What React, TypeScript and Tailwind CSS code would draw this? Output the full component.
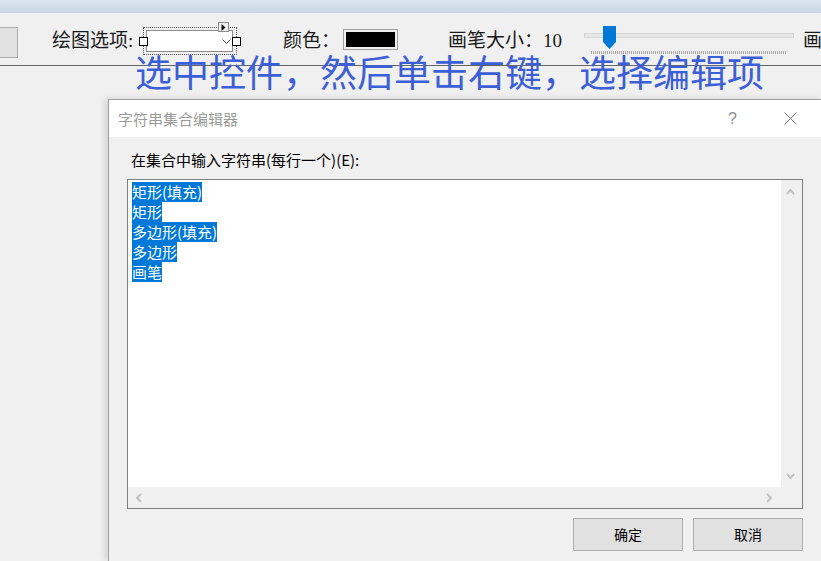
import React from "react";

function Chevron({ dir, className }: { dir: "up" | "down" | "left" | "right"; className?: string }) {
  const paths: Record<string, string> = {
    up: "M1 6 L4.5 2 L8 6",
    down: "M1 1 L4.5 5 L8 1",
    left: "M6 1 L2 5 L6 9",
    right: "M1 1 L5 5 L1 9",
  };
  const vertical = dir === "up" || dir === "down";
  return (
    <svg
      width={vertical ? 9 : 7}
      height={vertical ? 7 : 10}
      viewBox={vertical ? "0 0 9 7" : "0 0 7 10"}
      className={className}
    >
      <path d={paths[dir]} fill="none" stroke="#c2c2c2" strokeWidth="2" />
    </svg>
  );
}

const items = ["矩形(填充)", "矩形", "多边形(填充)", "多边形", "画笔"];

export default function App() {
  return (
    <div className="relative w-[821px] h-[561px] overflow-hidden bg-[#f0f0f0] font-['Noto_Sans_CJK_SC',sans-serif]">
      {/* top strip */}
      <div className="h-[13px] bg-linear-to-b from-[#dae4ef] to-[#cad6e4]" />

      {/* toolbar */}
      <div className="h-[53px] border-b border-[#646464] flex items-start overflow-hidden font-['Liberation_Serif','Noto_Sans_CJK_SC',serif] text-[19px] text-[#1a1a1a]">
        <div className="shrink-0 mt-[14px] h-[31px] w-[18px] bg-[#e1e1e1] border border-l-0 border-[#adadad]" />
        <div className="shrink-0 ml-[34px] w-[87px] mt-[18px] h-[20px] leading-[20px] whitespace-nowrap">绘图选项:</div>

        {/* combobox in designer */}
        <div className="shrink-0 relative mt-[9px] h-[33px] w-[102px]">
          <div className="absolute left-[4px] top-[5px] w-[94px] h-[28px] border border-dotted border-[#505050]" />
          <div className="absolute left-[7px] top-[8px] w-[87px] h-[22px] bg-white border border-[#8c8c8c]">
            <svg width="9" height="6" viewBox="0 0 9 6" className="absolute left-[75px] top-[8px]">
              <path d="M0.5 0.5 L4.5 4.5 L8.5 0.5" fill="none" stroke="#444" strokeWidth="1" />
            </svg>
          </div>
          <div className="absolute left-0 top-[15px] w-[9px] h-[9px] bg-white border border-black" />
          <div className="absolute left-[93px] top-[15px] w-[9px] h-[9px] bg-white border border-black" />
          <div className="absolute left-[79px] top-0 w-[11px] h-[10px] bg-[#f0f0f0] border border-[#8c8c8c] flex items-center justify-center">
            <svg width="5" height="7" viewBox="0 0 5 7">
              <path d="M0.5 0 L4.5 3.5 L0.5 7 Z" fill="#111" />
            </svg>
          </div>
        </div>

        <div className="shrink-0 ml-[42px] w-[60px] mt-[18px] h-[20px] leading-[20px] whitespace-nowrap">颜色：</div>
        <div className="shrink-0 mt-[16px] w-[55px] h-[21px] border border-[#a0a0a0] p-[2px] bg-[#f0f0f0]">
          <div className="w-full h-full bg-black" />
        </div>

        <div className="shrink-0 ml-[50px] w-[136px] mt-[18px] h-[20px] leading-[20px] whitespace-nowrap">画笔大小：10</div>

        {/* slider */}
        <div className="shrink-0 relative mt-[13px] w-[210px] h-[29px]">
          <div className="absolute left-0 right-0 top-[7px] h-[5px] bg-[#e7e7e7] border border-[#d6d6d6]" />
          <div className="absolute left-[7px] top-[25px] w-[196px] h-[3px] bg-[repeating-linear-gradient(90deg,#a8a8a8_0_1px,transparent_1px_2px)]" />
          <svg width="13" height="23" viewBox="0 0 13 23" className="absolute left-[19px] top-0">
            <path d="M0 0 H13 V16 L6.5 23 L0 16 Z" fill="#0078d7" />
          </svg>
        </div>

        <div className="shrink-0 ml-[9px] mt-[18px] h-[20px] leading-[20px] whitespace-nowrap">画笔</div>
      </div>

      {/* overlay instruction text */}
      <div className="absolute left-[135px] top-[51px] text-[37px] leading-[40px] text-[#3c5fd7] whitespace-nowrap">
        选中控件，然后单击右键，选择编辑项
      </div>

      {/* dialog */}
      <div className="ml-[108px] mt-[33px] w-[713px] h-[462px] border-l border-t border-[#a0a0a0] bg-[#f0f0f0] shadow-[-3px_0_7px_rgba(0,0,0,0.13)] flex flex-col">
        <div className="h-[37px] bg-white flex items-center shrink-0">
          <div className="pl-[9px] text-[15px] text-[#9a9a9a] leading-[20px]">字符串集合编辑器</div>
          <div className="ml-auto text-[16px] text-[#8a8a8a] leading-[20px] font-['Liberation_Sans',sans-serif]">?</div>
          <svg width="13" height="13" viewBox="0 0 13 13" className="ml-[47px] mr-[24px]">
            <path d="M0.5 0.5 L12.5 12.5 M12.5 0.5 L0.5 12.5" stroke="#7a7a7a" strokeWidth="1" />
          </svg>
        </div>

        <div className="px-[18px] flex flex-col">
          <div className="mt-[13px] h-[20px] leading-[20px] pl-[4px] text-[15px] text-black whitespace-nowrap">
            在集合中输入字符串(每行一个)(E):
          </div>

          <div className="mt-[9px] h-[330px] border border-[#7f7f7f] grid grid-cols-[1fr_21px] grid-rows-[1fr_21px]">
            <div className="bg-white pt-[2px] pl-[4px] flex flex-col items-start">
              {items.map((t) => (
                <span key={t} className="bg-[#0078d7] text-white text-[15px] leading-[20px] whitespace-nowrap">
                  {t}
                </span>
              ))}
            </div>
            <div className="bg-[#f0f0f0] flex flex-col items-center justify-between pt-[8px] pb-[7px] pr-[2px]">
              <Chevron dir="up" />
              <Chevron dir="down" />
            </div>
            <div className="bg-[#f0f0f0] flex items-center justify-between pl-[7px] pr-[8px]">
              <Chevron dir="left" />
              <Chevron dir="right" />
            </div>
            <div className="bg-[#f0f0f0]" />
          </div>

          <div className="mt-[9px] flex justify-end gap-[10px]">
            <button className="w-[110px] h-[33px] bg-[#e1e1e1] border border-[#adadad] text-[14px] text-black">确定</button>
            <button className="w-[110px] h-[33px] bg-[#e1e1e1] border border-[#adadad] text-[14px] text-black">取消</button>
          </div>
        </div>
      </div>
    </div>
  );
}
